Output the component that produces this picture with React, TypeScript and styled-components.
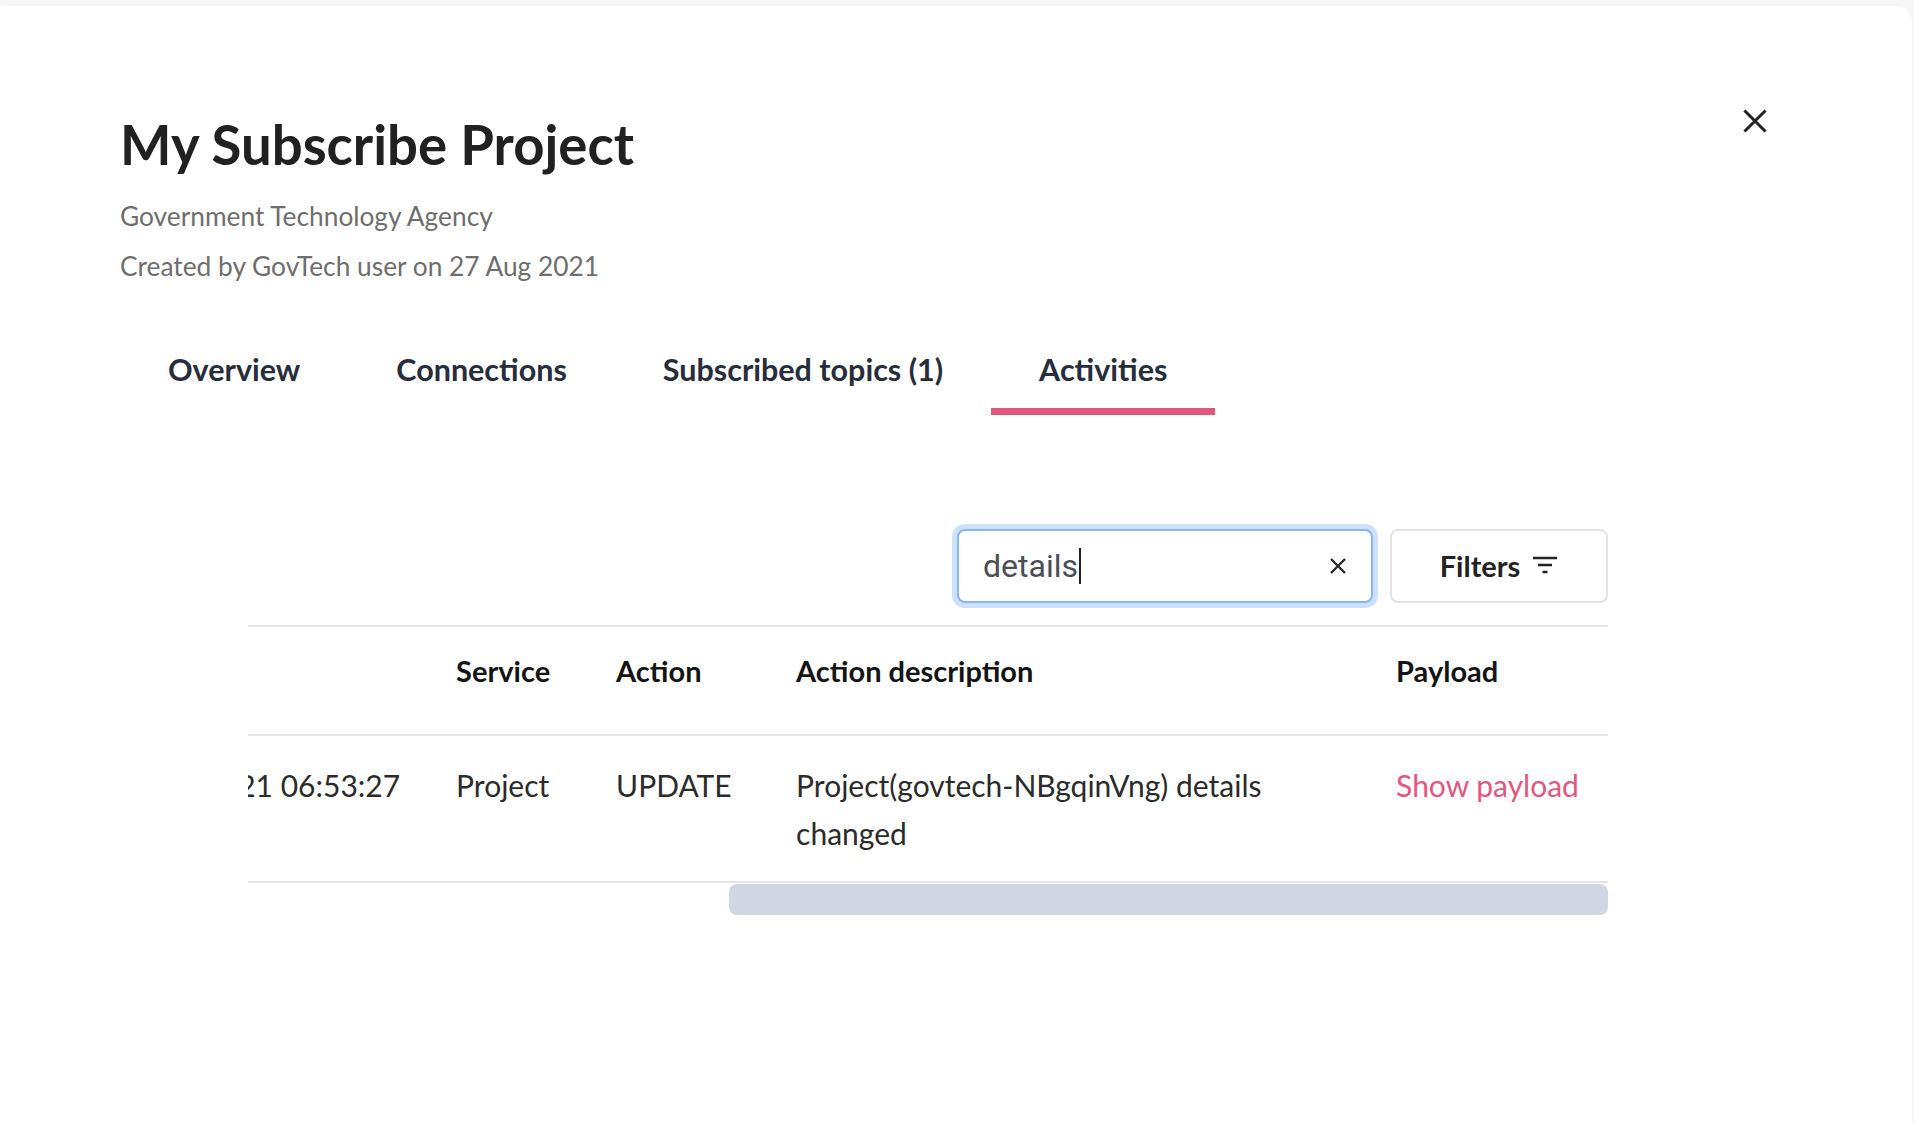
import React, { useLayoutEffect, useRef, useState } from "react";
import styled, { createGlobalStyle } from "styled-components";

const GlobalStyle = createGlobalStyle`
  html, body { margin: 0; padding: 0; background: #f6f6f6; }
  body { font-family: Lato, "Noto Sans", sans-serif; -webkit-font-smoothing: antialiased; }
  * { box-sizing: border-box; }
`;

const Page = styled.div`
  min-height: 100vh;
  padding: 6px 2px 0 0;
  display: flex;
`;

const Panel = styled.section`
  flex: 1;
  min-width: 0;
  min-height: calc(100vh - 6px);
  background: #ffffff;
  border-radius: 4px 16px 0 0;
  padding: 103px 145px 60px 120px;
`;

const Header = styled.header`
  display: flex;
  justify-content: space-between;
  align-items: flex-start;
`;

const TitleBlock = styled.div`
  padding-top: 5px;
`;

const Title = styled.h1`
  margin: 0;
  font-size: 54.5px;
  line-height: 60px;
  font-weight: 700;
  color: #212121;
`;

const Meta = styled.p<{ $first?: boolean }>`
  margin: ${(p) => (p.$first ? "17px 0 0" : "0")};
  font-size: 26.3px;
  line-height: 50px;
  color: #6e6e6e;
`;

const CloseButton = styled.button`
  width: 24px;
  height: 24px;
  padding: 0;
  border: none;
  background: none;
  cursor: pointer;
  display: flex;
  color: #222222;
`;

const TabList = styled.nav`
  display: flex;
  margin-top: 38px;
`;

const Tab = styled.button<{ $active?: boolean }>`
  border: none;
  background: none;
  font-family: inherit;
  padding: 20px 48px 19px;
  font-size: 30.5px;
  line-height: 40px;
  font-weight: 700;
  color: #272d3a;
  border-bottom: 7px solid ${(p) => (p.$active ? "#e0567d" : "transparent")};
  cursor: pointer;
`;

const TabContent = styled.div`
  margin: 114px 159px 0 128px;
`;

const Toolbar = styled.div`
  display: flex;
  justify-content: flex-end;
  gap: 17px;
`;

const SearchBox = styled.label`
  width: 416px;
  height: 74px;
  display: flex;
  align-items: center;
  padding: 0 24px 0 24px;
  border: 2px solid #88b5f6;
  border-radius: 8px;
  box-shadow: 0 0 0 5px #cde0fc;
  background: #fff;
`;

const SearchText = styled.span`
  font-family: Roboto, "Liberation Sans", sans-serif;
  font-size: 32px;
  color: #4a4e57;
`;

const Caret = styled.span`
  width: 2px;
  height: 36px;
  background: #1f1f1f;
  margin-left: 1px;
`;

const Spacer = styled.span`
  flex: 1;
`;

const ClearButton = styled.button`
  width: 18px;
  height: 18px;
  padding: 0;
  border: none;
  background: none;
  display: flex;
  color: #2a2a2a;
  cursor: pointer;
`;

const FilterButton = styled.button`
  width: 218px;
  height: 74px;
  display: flex;
  align-items: center;
  justify-content: center;
  gap: 12px;
  padding-bottom: 3px;
  border: 2px solid #e2e2e2;
  border-radius: 8px;
  background: #fff;
  font-family: inherit;
  font-size: 29px;
  font-weight: 700;
  color: #222;
  cursor: pointer;
`;

const Scroller = styled.div`
  margin-top: 22px;
  overflow: hidden;
`;

const Grid = styled.div`
  display: grid;
  width: max-content;
  grid-template-columns: 290px 280px max-content 160px 180px 600px 240px;
  border-top: 2px solid #e4e4e4;
`;

const HeadCell = styled.div`
  padding: 24px 28px 43px;
  font-size: 29px;
  line-height: 40px;
  font-weight: 700;
  color: #141414;
  white-space: nowrap;
  border-bottom: 2px solid #e4e4e4;
`;

const Cell = styled.div<{ $nowrap?: boolean }>`
  padding: 25px 28px 24px;
  font-size: 30px;
  line-height: 48px;
  color: #2b2b2b;
  white-space: ${(p) => (p.$nowrap ? "nowrap" : "normal")};
  border-bottom: 2px solid #e4e4e4;
`;

const PayloadLink = styled.a`
  color: #e2577f;
  text-decoration: none;
  white-space: nowrap;
  cursor: pointer;
`;

const ScrollTrack = styled.div`
  margin-top: 1px;
  height: 31px;
  position: relative;
`;

const ScrollThumb = styled.div`
  position: absolute;
  top: 0;
  height: 31px;
  border-radius: 8px;
  background: #d0d7e2;
`;

const CloseIcon = () => (
  <svg width="24" height="24" viewBox="0 0 24 24" fill="none" stroke="currentColor" strokeWidth="3" strokeLinecap="square">
    <path d="M2.5 2.5 L21.5 21.5 M21.5 2.5 L2.5 21.5" />
  </svg>
);

const ClearIcon = () => (
  <svg width="18" height="18" viewBox="0 0 18 18" fill="none" stroke="currentColor" strokeWidth="2.4">
    <path d="M2 2 L16 16 M16 2 L2 16" />
  </svg>
);

const FilterIcon = () => (
  <svg width="26" height="20" viewBox="0 0 26 20" fill="none" stroke="currentColor" strokeWidth="2.6">
    <path d="M1 3 H25 M6 10 H20 M10.5 17 H15.5" />
  </svg>
);

const headers = ["Activity ID", "Performed by", "Date", "Service", "Action", "Action description", "Payload"];

export default function App() {
  const scrollRef = useRef<HTMLDivElement>(null);
  const [thumb, setThumb] = useState({ left: 0, width: 0 });

  useLayoutEffect(() => {
    const update = () => {
      const el = scrollRef.current;
      if (!el) return;
      el.scrollLeft = el.scrollWidth - el.clientWidth;
      const ratio = el.clientWidth / el.scrollWidth;
      setThumb({ left: el.scrollLeft * ratio, width: el.clientWidth * ratio });
    };
    update();
    if ((document as any).fonts?.ready) (document as any).fonts.ready.then(update);
  }, []);

  return (
    <>
      <GlobalStyle />
      <Page>
        <Panel>
          <Header>
            <TitleBlock>
              <Title>My Subscribe Project</Title>
              <Meta $first>Government Technology Agency</Meta>
              <Meta>Created by GovTech user on 27 Aug 2021</Meta>
            </TitleBlock>
            <CloseButton aria-label="Close">
              <CloseIcon />
            </CloseButton>
          </Header>

          <TabList>
            <Tab>Overview</Tab>
            <Tab>Connections</Tab>
            <Tab>Subscribed topics (1)</Tab>
            <Tab $active>Activities</Tab>
          </TabList>

          <TabContent>
            <Toolbar>
              <SearchBox>
                <SearchText>details</SearchText>
                <Caret />
                <Spacer />
                <ClearButton aria-label="Clear search">
                  <ClearIcon />
                </ClearButton>
              </SearchBox>
              <FilterButton>
                Filters
                <FilterIcon />
              </FilterButton>
            </Toolbar>

            <Scroller ref={scrollRef}>
              <Grid>
                {headers.map((h) => (
                  <HeadCell key={h}>{h}</HeadCell>
                ))}
                <Cell $nowrap>act-7c2e91d0</Cell>
                <Cell $nowrap>GovTech user</Cell>
                <Cell $nowrap>27 Aug 2021 06:53:27</Cell>
                <Cell>Project</Cell>
                <Cell>UPDATE</Cell>
                <Cell>Project(govtech-NBgqinVng) details changed</Cell>
                <Cell>
                  <PayloadLink>Show payload</PayloadLink>
                </Cell>
              </Grid>
            </Scroller>
            <ScrollTrack>
              <ScrollThumb style={{ left: thumb.left, width: thumb.width }} />
            </ScrollTrack>
          </TabContent>
        </Panel>
      </Page>
    </>
  );
}
